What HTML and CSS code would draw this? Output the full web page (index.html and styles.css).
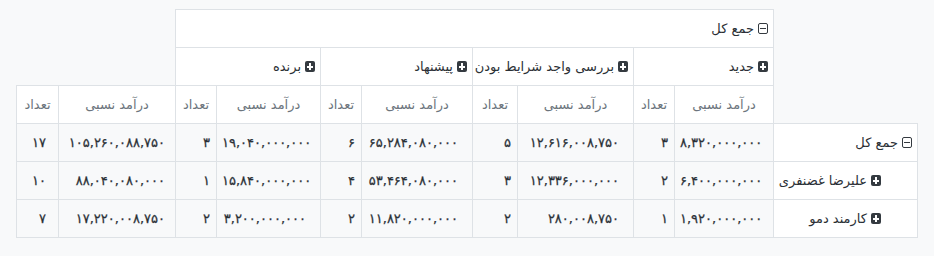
FILE: index.html
```html
<!DOCTYPE html>
<html lang="fa" dir="rtl">
<head>
<meta charset="utf-8">
<title>Pivot</title>
<link rel="stylesheet" href="styles.css">
</head>
<body>
<div class="pivot">
  <table class="pivot-table">
    <colgroup>
      <col class="w144">
      <col class="w99">
      <col class="w41">
      <col class="w116">
      <col class="w45">
      <col class="w111">
      <col class="w41">
      <col class="w104">
      <col class="w41">
      <col class="w117">
      <col class="w42">
    </colgroup>
    <thead>
      <tr>
        <th class="blank" rowspan="3"></th>
        <th class="group" colspan="8"><span class="ico ico-minus"></span>جمع کل</th>
        <th class="blank" colspan="2" rowspan="2"></th>
      </tr>
      <tr>
        <th class="group" colspan="2"><span class="ico ico-plus"></span>جدید</th>
        <th class="group" colspan="2"><span class="ico ico-plus"></span>بررسی واجد شرایط بودن</th>
        <th class="group" colspan="2"><span class="ico ico-plus"></span>پیشنهاد</th>
        <th class="group" colspan="2"><span class="ico ico-plus"></span>برنده</th>
      </tr>
      <tr>
        <th class="measure">درآمد نسبی</th>
        <th class="measure">تعداد</th>
        <th class="measure">درآمد نسبی</th>
        <th class="measure">تعداد</th>
        <th class="measure">درآمد نسبی</th>
        <th class="measure">تعداد</th>
        <th class="measure">درآمد نسبی</th>
        <th class="measure">تعداد</th>
        <th class="measure">درآمد نسبی</th>
        <th class="measure">تعداد</th>
      </tr>
    </thead>
    <tbody>
      <tr>
        <th class="rowhead"><span class="ico ico-minus"></span>جمع کل</th>
        <td class="val rev">۸,۳۲۰,۰۰۰,۰۰۰</td>
        <td class="val cnt">۳</td>
        <td class="val rev">۱۲,۶۱۶,۰۰۸,۷۵۰</td>
        <td class="val cnt">۵</td>
        <td class="val rev">۶۵,۲۸۴,۰۸۰,۰۰۰</td>
        <td class="val cnt">۶</td>
        <td class="val rev">۱۹,۰۴۰,۰۰۰,۰۰۰</td>
        <td class="val cnt">۳</td>
        <td class="val rev total">۱۰۵,۲۶۰,۰۸۸,۷۵۰</td>
        <td class="val cnt total">۱۷</td>
      </tr>
      <tr>
        <th class="rowhead sub"><span class="ico ico-plus"></span>علیرضا غضنفری</th>
        <td class="val rev">۶,۴۰۰,۰۰۰,۰۰۰</td>
        <td class="val cnt">۲</td>
        <td class="val rev">۱۲,۳۳۶,۰۰۰,۰۰۰</td>
        <td class="val cnt">۳</td>
        <td class="val rev">۵۳,۴۶۴,۰۸۰,۰۰۰</td>
        <td class="val cnt">۴</td>
        <td class="val rev">۱۵,۸۴۰,۰۰۰,۰۰۰</td>
        <td class="val cnt">۱</td>
        <td class="val rev total">۸۸,۰۴۰,۰۸۰,۰۰۰</td>
        <td class="val cnt total">۱۰</td>
      </tr>
      <tr>
        <th class="rowhead sub"><span class="ico ico-plus"></span>کارمند دمو</th>
        <td class="val rev">۱,۹۲۰,۰۰۰,۰۰۰</td>
        <td class="val cnt">۱</td>
        <td class="val rev">۲۸۰,۰۰۸,۷۵۰</td>
        <td class="val cnt">۲</td>
        <td class="val rev">۱۱,۸۲۰,۰۰۰,۰۰۰</td>
        <td class="val cnt">۲</td>
        <td class="val rev">۳,۲۰۰,۰۰۰,۰۰۰</td>
        <td class="val cnt">۲</td>
        <td class="val rev total">۱۷,۲۲۰,۰۰۸,۷۵۰</td>
        <td class="val cnt total">۷</td>
      </tr>
    </tbody>
  </table>
</div>
</body>
</html>
```
FILE: styles.css
```css
html, body {
  margin: 0;
  padding: 0;
  background: #f8f9fa;
}
body {
  font-family: "DejaVu Sans", "Noto Sans", sans-serif;
  font-size: 13px;
  color: #343a40;
}
.pivot {
  padding: 9px 16px 0 17px;
}
.pivot-table {
  width: 901px;
  table-layout: fixed;
  border-collapse: collapse;
}
.w144 { width: 144px; }
.w99 { width: 99px; }
.w41 { width: 41px; }
.w116 { width: 116px; }
.w45 { width: 45px; }
.w111 { width: 111px; }
.w104 { width: 104px; }
.w117 { width: 117px; }
.w42 { width: 42px; }

.pivot-table th,
.pivot-table td {
  border: 1px solid #dee2e6;
  height: 38px;
  padding: 0 5px;
  vertical-align: middle;
  white-space: nowrap;
  font-weight: normal;
  box-sizing: border-box;
}
.pivot-table th.blank {
  border: none;
  background: transparent;
}
.pivot-table th.group {
  background: #fff;
  text-align: right;
  color: #2b3035;
}
.pivot-table th.measure {
  background: #fff;
  text-align: center;
  color: #6c757d;
}
.pivot-table th.rowhead {
  background: #fff;
  text-align: right;
  color: #2b3035;
}
.pivot-table th.rowhead.sub {
  padding-right: 36px;
}
.pivot-table td.val {
  direction: ltr;
  text-align: right;
  color: #2a3036;
  font-size: 13px;
  letter-spacing: 0.1px;
  -webkit-text-stroke: 0.25px #2a3036;
}
.pivot-table td.rev {
  padding-right: 14px;
}
.pivot-table td.rev.total {
  padding-right: 10px;
}
.pivot-table td.cnt {
  padding-right: 6px;
}
.pivot-table td.cnt.total {
  padding-right: 12px;
}

.ico {
  display: inline-block;
  width: 10px;
  height: 11px;
  box-sizing: border-box;
  margin-left: 4px;
  vertical-align: -1px;
  position: relative;
  border-radius: 2px;
}
.ico-plus {
  background: #343a40;
}
.ico-plus::before,
.ico-plus::after {
  content: "";
  position: absolute;
  background: #fff;
}
.ico-plus::before {
  left: 2px;
  right: 2px;
  top: 4.5px;
  height: 2px;
}
.ico-plus::after {
  top: 2px;
  bottom: 2px;
  left: 4px;
  width: 2px;
}
.ico-minus {
  border: 1px solid #343a40;
}
.ico-minus::before {
  content: "";
  position: absolute;
  left: 1px;
  right: 1px;
  top: 4px;
  height: 1px;
  background: #343a40;
}
```
